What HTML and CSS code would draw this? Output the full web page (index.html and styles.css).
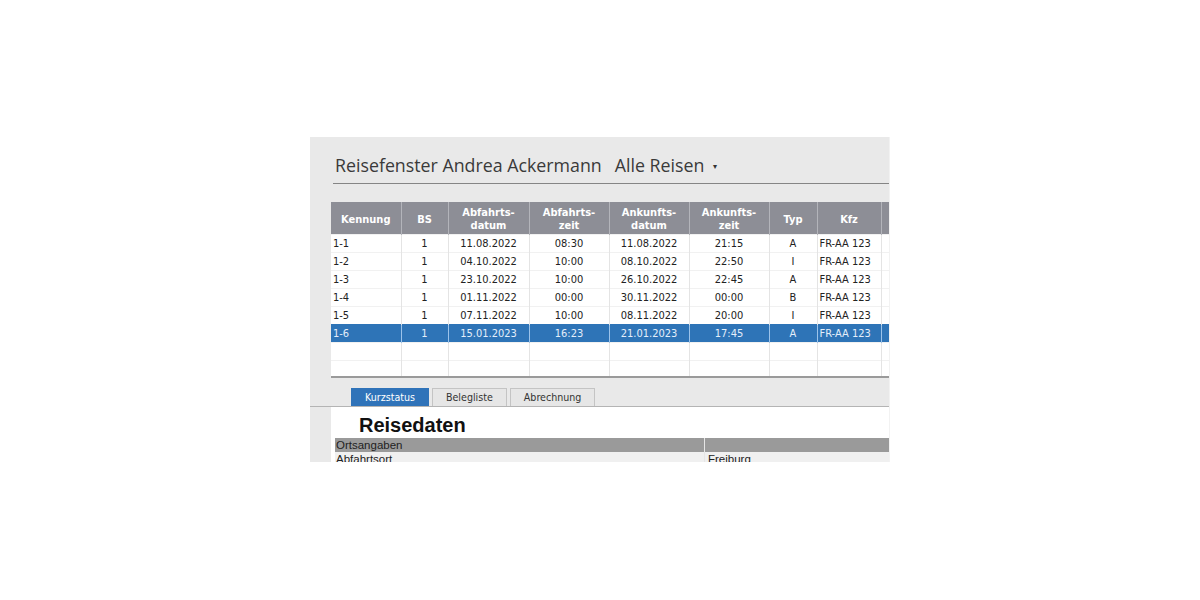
FILE: index.html
```html
<!DOCTYPE html>
<html lang="de">
<head>
<meta charset="utf-8">
<title>Reisefenster</title>
<link rel="stylesheet" href="styles.css">
</head>
<body>
<div class="stage">
  <div class="panel">
    <div class="head">
      <span class="title">Reisefenster Andrea Ackermann</span>
      <span class="filter">Alle Reisen <span class="caret">&#9662;</span></span>
    </div>
    <div class="grid-wrap">
      <table class="grid">
        <colgroup>
          <col class="c-ken"><col class="c-bs"><col class="c-ad"><col class="c-az"><col class="c-kd"><col class="c-kz"><col class="c-typ"><col class="c-kfz"><col class="c-more">
        </colgroup>
        <thead>
          <tr>
            <th>Kennung</th><th>BS</th><th>Abfahrts-<br>datum</th><th>Abfahrts-<br>zeit</th><th>Ankunfts-<br>datum</th><th>Ankunfts-<br>zeit</th><th>Typ</th><th>Kfz</th><th></th>
          </tr>
        </thead>
        <tbody>
          <tr><td class="l">1-1</td><td>1</td><td>11.08.2022</td><td>08:30</td><td>11.08.2022</td><td>21:15</td><td>A</td><td class="l">FR-AA 123</td><td></td></tr>
          <tr><td class="l">1-2</td><td>1</td><td>04.10.2022</td><td>10:00</td><td>08.10.2022</td><td>22:50</td><td>I</td><td class="l">FR-AA 123</td><td></td></tr>
          <tr><td class="l">1-3</td><td>1</td><td>23.10.2022</td><td>10:00</td><td>26.10.2022</td><td>22:45</td><td>A</td><td class="l">FR-AA 123</td><td></td></tr>
          <tr><td class="l">1-4</td><td>1</td><td>01.11.2022</td><td>00:00</td><td>30.11.2022</td><td>00:00</td><td>B</td><td class="l">FR-AA 123</td><td></td></tr>
          <tr><td class="l">1-5</td><td>1</td><td>07.11.2022</td><td>10:00</td><td>08.11.2022</td><td>20:00</td><td>I</td><td class="l">FR-AA 123</td><td></td></tr>
          <tr class="sel"><td class="l">1-6</td><td>1</td><td>15.01.2023</td><td>16:23</td><td>21.01.2023</td><td>17:45</td><td>A</td><td class="l">FR-AA 123</td><td></td></tr>
          <tr class="empty"><td></td><td></td><td></td><td></td><td></td><td></td><td></td><td></td><td></td></tr>
          <tr class="empty last"><td></td><td></td><td></td><td></td><td></td><td></td><td></td><td></td><td></td></tr>
        </tbody>
      </table>
    </div>
    <div class="tabs">
      <span class="tab active">Kurzstatus</span>
      <span class="tab">Belegliste</span>
      <span class="tab">Abrechnung</span>
    </div>
    <div class="detail">
      <h2 class="detail-title">Reisedaten</h2>
      <div class="drow dhead"><span class="k">Ortsangaben</span><span class="v"></span></div>
      <div class="drow"><span class="k">Abfahrtsort</span><span class="v">Freiburg</span></div>
    </div>
  </div>
</div>
</body>
</html>
```

FILE: styles.css
```css
html, body {
  margin: 0;
  padding: 0;
  background: #ffffff;
}

.stage {
  padding: 137px 0 0 310px;
}

.panel {
  width: 580px;
  height: 325px;
  overflow: hidden;
  background: #e9e9e9;
  border-right: 1px solid #f2f2f2;
  box-sizing: border-box;
}

.head {
  margin-left: 23px;
  height: 47px;
  box-sizing: border-box;
  border-bottom: 1px solid #858585;
  display: flex;
  align-items: center;
  padding: 9px 0 0 2px;
  font-family: "Open Sans", "Noto Sans", sans-serif;
  font-size: 17.8px;
  color: #3a3a3a;
  white-space: nowrap;
}

.filter {
  margin-left: 13px;
}

.caret {
  font-size: 8px;
  margin-left: 4px;
  vertical-align: 3px;
  color: #333;
}

.grid-wrap {
  margin: 18px 0 0 21px;
  width: 600px;
}

.grid {
  border-collapse: collapse;
  table-layout: fixed;
  width: 620px;
  font-family: "DejaVu Sans Condensed", "DejaVu Sans", sans-serif;
  font-size: 11px;
  color: #222;
  background: #fff;
}

.c-ken { width: 70px; }
.c-bs { width: 47px; }
.c-ad { width: 81px; }
.c-az { width: 80px; }
.c-kd { width: 80px; }
.c-kz { width: 80px; }
.c-typ { width: 48px; }
.c-kfz { width: 64px; }
.c-more { width: 70px; }

.grid th {
  background: #8d8e96;
  color: #fff;
  font-weight: bold;
  height: 32px;
  box-sizing: border-box;
  padding: 3px 0 0 0;
  line-height: 13px;
  text-align: center;
  border-left: 1px solid #b3b4ba;
  vertical-align: middle;
}

.grid th:first-child {
  border-left: none;
}

.grid td {
  height: 17px;
  line-height: 17px;
  padding: 0;
  text-align: center;
  border-left: 1px solid #e4e4e4;
  border-top: 1px solid #f1f1f1;
  white-space: nowrap;
  overflow: hidden;
}

.grid td:first-child {
  border-left: none;
}

.grid td.l {
  text-align: left;
  padding-left: 2px;
}

.grid tr.sel td {
  background: #2e74b7;
  color: #e4eefa;
  border-left-color: #9cc3ea;
  border-top-color: #2e74b7;
}

.grid tr.sel td:first-child {
  border-left: none;
}

.grid tr.last td {
  height: 15px;
  border-bottom: 2px solid #9a9a9a;
}

.tabs {
  display: flex;
  gap: 3px;
  padding: 10px 0 0 41px;
  height: 18px;
  border-bottom: 1px solid #b4b4b4;
}

.tab {
  box-sizing: border-box;
  height: 18px;
  padding: 0 13px;
  display: flex;
  align-items: center;
  font-family: "DejaVu Sans Condensed", "DejaVu Sans", sans-serif;
  font-size: 10.6px;
  color: #333;
  background: #e6e6e6;
  border: 1px solid #c4c4c4;
  border-bottom: none;
}

.tab.active {
  background: #2f73b9;
  border-color: #2f73b9;
  color: #ffffff;
}

.detail {
  margin-left: 21px;
  background: #ffffff;
  height: 60px;
  padding-top: 1px;
}

.detail-title {
  margin: 5px 0 0 28px;
  font-family: "Liberation Sans", Arial, sans-serif;
  font-size: 20px;
  font-weight: bold;
  color: #111;
  line-height: 24px;
  height: 24px;
}

.drow {
  display: flex;
  margin-left: 4px;
  height: 14px;
  font-family: "Liberation Sans", Arial, sans-serif;
  font-size: 11.5px;
  line-height: 14px;
  color: #222;
  background: #f0f0f0;
}

.drow.dhead {
  background: #9a9a9a;
  margin-top: 1px;
}

.drow .k {
  width: 368px;
  padding-left: 1px;
  border-right: 1px solid #e6e6e6;
}

.drow .v {
  flex: 1;
  padding-left: 3px;
}
```
